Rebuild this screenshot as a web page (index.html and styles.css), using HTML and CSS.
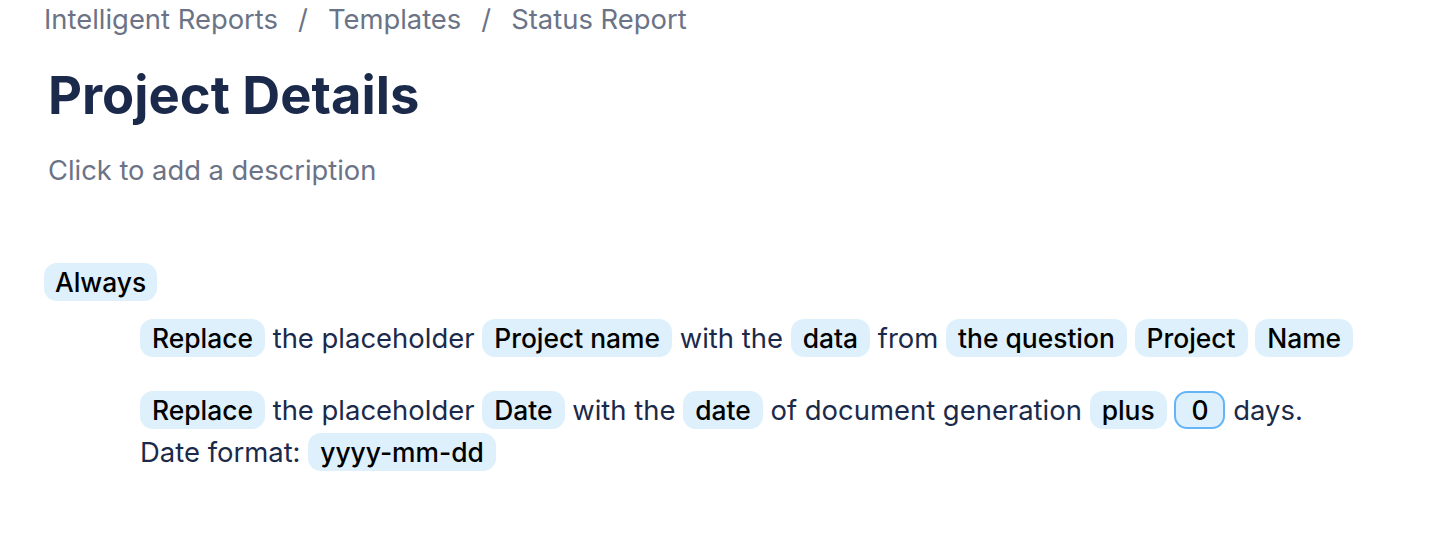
FILE: index.html
```html
<!DOCTYPE html>
<html>
<head>
<meta charset="utf-8">
<link rel="stylesheet" href="styles.css">
</head>
<body>
<div class="page">
  <nav class="crumbs">
    <span>Intelligent Reports</span><span class="sep">/</span><span>Templates</span><span class="sep">/</span><span>Status Report</span>
  </nav>
  <h1 class="title">Project Details</h1>
  <p class="desc">Click to add a description</p>
  <div class="rules">
    <div class="cond"><span class="chip">Always</span></div>
    <div class="actions">
      <p class="action"><span class="chip">Replace</span> the placeholder <span class="chip">Project name</span> with the <span class="chip">data</span> from <span class="chip">the question</span> <span class="chip">Project</span> <span class="chip">Name</span></p>
      <p class="action"><span class="chip">Replace</span> the placeholder <span class="chip">Date</span> with the <span class="chip">date</span> of document generation <span class="chip">plus</span> <span class="chip num">0</span> days.<br>Date format: <span class="chip">yyyy-mm-dd</span></p>
    </div>
  </div>
</div>
</body>
</html>
```
FILE: styles.css
```css
html, body {
  margin: 0;
  padding: 0;
  background: #ffffff;
}
body {
  font-family: Inter, "Noto Sans", sans-serif;
}
.page {
  padding: 0 0 0 44px;
}
.crumbs {
  font-size: 27.4px;
  line-height: 38px;
  color: #6b7386;
  display: flex;
  margin-top: 0;
}
.crumbs .sep {
  margin: 0 20px;
}
.title {
  font-size: 52.5px;
  font-weight: 700;
  color: #1b2a4a;
  margin: 25px 0 0 4px;
  line-height: 64px;
}
.desc {
  font-size: 27.3px;
  color: #6b7386;
  margin: 28px 0 0 4px;
  line-height: 32px;
}
.rules {
  margin-top: 76px;
}
.chip {
  display: inline-block;
  background: #ddf0fb;
  color: #000000;
  font-weight: 500;
  font-size: 26.4px;
  border-radius: 13px;
  padding: 0 12px;
  line-height: 38px;
  height: 38px;
  box-sizing: border-box;
}
.cond {
  font-size: 27.3px;
  line-height: 38px;
}
.cond .chip {
  padding: 0 11px;
}
.actions {
  padding-left: 96px;
  padding-top: 15px;
}
.action {
  font-size: 27.45px;
  color: #1b2a4a;
  line-height: 42px;
  margin: 0 0 30px 0;
}
.chip.num {
  border: 2px solid #64b5f6;
  line-height: 34px;
  padding: 0 15px;
}
```
